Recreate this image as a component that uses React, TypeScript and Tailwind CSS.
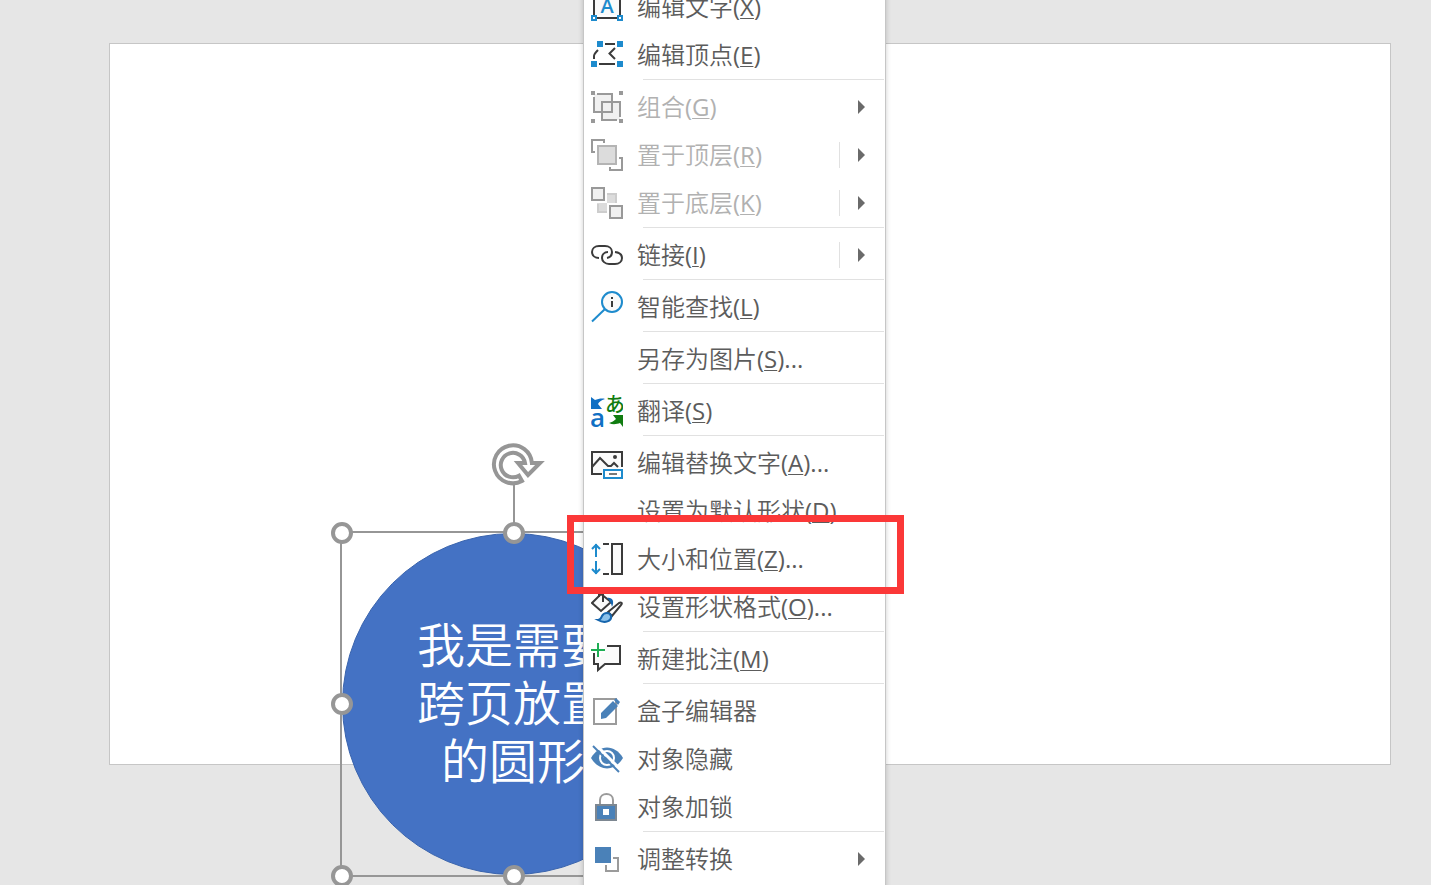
import { Fragment } from 'react';
import type { ReactNode } from 'react';

interface MenuEntry {
  label: string;
  accessKey?: string;
  suffix?: string;
  icon?: ReactNode;
  disabled?: boolean;
  submenu?: boolean;
  split?: boolean;
}

const dark = '#3b3b3b';
const blue = '#1e8bcd';
const gray = '#999';
const steel = '#4a81b8';

function Icon({ children }: { children: ReactNode }) {
  return (
    <svg className="size-8" viewBox="0 0 32 32" fill="none" strokeWidth="2" aria-hidden="true">
      {children}
    </svg>
  );
}

const icons = {
  editText: (
    <Icon>
      <path d="M3 24V1h26v23M6 27h20" stroke={dark} fill="#fafafa"/>
      <text x="16" y="22" textAnchor="middle" fill={blue} className="font-['Open_Sans'] text-[20px] font-semibold">A</text>
      <path d="M1 25h4v4H1zM27 25h4v4h-4z" stroke={blue} fill="#fff"/>
    </Icon>
  ),
  editPoints: (
    <Icon>
      <path d="M3 20v-3c0-2 2-4 4-6M14 5h10M8 25h16M24 9l-5.500 5.500L24 20" stroke={dark}/>
      <path d="M6 2h6v6H6zM26 2h6v6h-6zM0 22h6v6H0zM26 22h6v6h-6z" fill={blue}/>
    </Icon>
  ),
  group: (
    <Icon>
      <path d="M3 3h18v18H3zM11 11h18v18H11z" fill="#f0f0f0"/>
      <path d="M6 3h15v18H3V6M11 26V11h18v15M10 29h16" stroke={gray}/>
      <path d="M11 26v3h15" stroke={gray}/>
      <path d="M0 0h4v4H0zM28 0h4v4h-4zM0 28h4v4H0zM28 28h4v4h-4z" fill={gray}/>
    </Icon>
  ),
  bringFront: (
    <Icon>
      <path d="M4 13H1V1h12v3M28 19h3v12H19v-3" stroke={gray}/>
      <path d="M7 7h18v18H7z" stroke="#b4b4b4" fill="#dcdcdc"/>
    </Icon>
  ),
  sendBack: (
    <Icon>
      <path d="M16 6h10v10H16zM6 16h10v10H6z" fill="#dcdcdc"/>
      <path d="M16 7h9v9M7 17v8h9" stroke="#cdcdcd"/>
      <path d="M1 1h12v12H1zM19 19h12v12H19z" stroke={gray} fill="#f0f0f0"/>
    </Icon>
  ),
  link: (
    <Icon>
      <path d="M8 19C4 19 1 16.500 1 13s3-6 7-6h6c4 0 7 2.500 7 6s-2 5.500-5 6" stroke={dark}/>
      <path d="M17 13c-4 0-6 3-6 6s3 6 7 6h6c4 0 7-2.500 7-6s-3-5.500-7-6" stroke={dark}/>
    </Icon>
  ),
  lookup: (
    <Icon>
      <circle cx="21" cy="11" r="10" stroke={blue} fill="#fafafa"/>
      <path d="M1 30.500l13-12.500" stroke={blue}/>
      <path d="M21 6v2M21 10v6" stroke={dark}/>
    </Icon>
  ),
  translate: (
    <Icon>
      <path d="M0 2l4 3c3-1 7-2 10-1-4 1-6 3-7 5l4 5H0z" fill="#1070c4"/>
      <path d="M32 20H22l3 4c-2 2-4 3-7 4 4 2 8 1 11 0l3 4z" fill="#107c10"/>
      <text x="-1" y="32" fill="#1070c4" className="font-['Open_Sans'] text-[26px] font-semibold">a</text>
      <text x="14" y="17" fill="#107c10" className="font-['Noto_Sans_CJK_JP'] text-[20px] font-medium">あ</text>
    </Icon>
  ),
  altText: (
    <Icon>
      <path d="M11 27H1V5h30v15" stroke={dark} fill="#fafafa"/>
      <path d="M1 20l8-9 8 8h3l3-3 4 4" stroke={dark}/>
      <circle cx="24" cy="10" r="2" fill={dark}/>
      <path d="M13 23h18v8H13z" stroke={blue} fill="#fff"/>
      <path d="M18 27h8" stroke="#777"/>
    </Icon>
  ),
  size: (
    <Icon>
      <path d="M5 14V1M1 6l4-4 4 4M5 18v13M1 26l4 4 4-4" stroke={blue}/>
      <path d="M12 1h6M12 31h6" stroke={dark}/>
      <path d="M21 1h10v30H21z" stroke={dark} fill="#fafafa"/>
    </Icon>
  ),
  formatShape: (
    <Icon>
      <path d="M10 3l10 8-10 9-9-8z" stroke={dark} fill="#fafafa"/>
      <path d="M12 11V2c0-2-4-2-4 0v4" stroke={dark}/>
      <path d="M16 7c5-1 8 3 5 9-1-4-2-6-5-9z" fill="#1565ad"/>
      <path d="M17 21L28 12c2-1 4 0 2 2l-9 11z" stroke={dark} fill="#fff"/>
      <path d="M7 29c3 0 3-2 4-4 2-4 8-4 9 0 1 5-6 8-13 4z" fill="#8cc1ea" stroke="#1565ad"/>
    </Icon>
  ),
  comment: (
    <Icon>
      <path d="M16 3h13v18H14l-7 6v-6H3V10" stroke={dark} fill="#fafafa"/>
      <path d="M7 0v14M0 7h14" stroke="#fff" strokeWidth="6"/>
      <path d="M7 0v14M0 7h14" stroke="#1fae54"/>
    </Icon>
  ),
  boxEditor: (
    <Icon>
      <path d="M3 4h22v25H3z" stroke="#9b9b9b"/>
      <path d="M10 24v-6L22 6l5 5-12 12zM23 5l2-2 4 4-2 3z" fill={steel}/>
    </Icon>
  ),
  hide: (
    <Icon>
      <path d="M0 15C8 1 24 1 32 15 24 29 8 29 0 15z" fill={steel}/>
      <circle cx="16" cy="15" r="7" stroke="#fff" strokeWidth="2"/>
      <path d="M13 15c0-2 1-3 3-3" stroke="#fff"/>
      <path d="M4 1l26 26" stroke="#fff" strokeWidth="3"/>
      <path d="M2 3l26 26" stroke={steel}/>
    </Icon>
  ),
  lock: (
    <Icon>
      <path d="M9 14V9c0-8 13-8 13 0v5" stroke="#9b9b9b"/>
      <path d="M5 14h20v15H5z" fill={steel} stroke="#7d8791"/>
      <path d="M12 18h6v6h-6z" fill="#fff"/>
    </Icon>
  ),
  convert: (
    <Icon>
      <path d="M4 4h16v16H4z" fill={steel}/>
      <path d="M15 22v6h12V15h-5" stroke="#9b9b9b"/>
    </Icon>
  ),
};

// each inner list is one section of the menu, sections are divided by a line
const sections: MenuEntry[][] = [
  [
    { label: '编辑文字', accessKey: 'X', icon: icons.editText },
    { label: '编辑顶点', accessKey: 'E', icon: icons.editPoints },
  ],
  [
    { label: '组合', accessKey: 'G', icon: icons.group, disabled: true, submenu: true },
    { label: '置于顶层', accessKey: 'R', icon: icons.bringFront, disabled: true, submenu: true, split: true },
    { label: '置于底层', accessKey: 'K', icon: icons.sendBack, disabled: true, submenu: true, split: true },
  ],
  [{ label: '链接', accessKey: 'I', icon: icons.link, submenu: true, split: true }],
  [{ label: '智能查找', accessKey: 'L', icon: icons.lookup }],
  [{ label: '另存为图片', accessKey: 'S', suffix: '...' }],
  [{ label: '翻译', accessKey: 'S', icon: icons.translate }],
  [
    { label: '编辑替换文字', accessKey: 'A', suffix: '...', icon: icons.altText },
    { label: '设置为默认形状', accessKey: 'D' },
    { label: '大小和位置', accessKey: 'Z', suffix: '...', icon: icons.size },
    { label: '设置形状格式', accessKey: 'O', suffix: '...', icon: icons.formatShape },
  ],
  [{ label: '新建批注', accessKey: 'M', icon: icons.comment }],
  [
    { label: '盒子编辑器', icon: icons.boxEditor },
    { label: '对象隐藏', icon: icons.hide },
    { label: '对象加锁', icon: icons.lock },
  ],
  [{ label: '调整转换', icon: icons.convert, submenu: true }],
];

function MenuItem({ entry }: { entry: MenuEntry }) {
  return (
    <button
      type="button"
      role="menuitem"
      disabled={entry.disabled}
      className="flex h-12 w-full items-center pr-5 pl-[7px] text-left text-[#5c5c5c] disabled:text-[#b1b1b1]"
    >
      <span className="mr-[14px] size-8 shrink-0">{entry.icon}</span>
      <span className="flex-1 whitespace-nowrap">
        {entry.label}
        {entry.accessKey && (
          <span className="font-normal">
            (<u className="decoration-1 underline-offset-2">{entry.accessKey}</u>){entry.suffix}
          </span>
        )}
      </span>
      {entry.split && <span className="mr-[18px] h-[26px] w-px bg-[#e1e1e1]" />}
      {entry.submenu && (
        <svg className="h-[14px] w-[7px]" viewBox="0 0 7 14" aria-hidden="true">
          <path d="M0 0l7 7-7 7z" fill="#6a6a6a"/>
        </svg>
      )}
    </button>
  );
}

function ContextMenu() {
  return (
    <div
      role="menu"
      className="absolute -top-[18px] left-[583px] w-[303px] border border-[#c6c6c6] bg-white pb-12 text-[24px] leading-8 font-[350] shadow-[0_0_5px_rgba(0,0,0,0.2)]"
    >
      {sections.map((section, index) => (
        <Fragment key={index}>
          {index > 0 && <div role="separator" className="mr-px mb-[3px] ml-[59px] h-px bg-[#e1e1e1]" />}
          {section.map((entry) => <MenuItem key={entry.label} entry={entry} />)}
        </Fragment>
      ))}
    </div>
  );
}

function Handle({ className }: { className: string }) {
  return <span className={`absolute size-[22px] rounded-full border-[4px] border-[#969696] bg-white ${className}`} />;
}

function SelectedShape() {
  return (
    <div className="absolute top-[531px] left-[340px] size-[346px] border-2 border-[#969696]">
      <div className="flex size-full items-center justify-center rounded-full border border-[#3a64ad] bg-[#4472c4] pb-[2px]">
        <p className="text-center text-[48px] leading-[58px] font-[350] text-white">
          我是需要<br />跨页放置<br />的圆形
        </p>
      </div>
      <span className="absolute -top-12 left-[171px] h-12 w-[2px] bg-[#969696]" />
      <svg className="absolute -top-[90px] left-[149px] h-12 w-14" viewBox="0 0 56 48" aria-hidden="true">
        <path
          d="M40.900 20H49L37 32 27 20h7A12.200 12.200 0 1 0 28 32.700L31 38A19 19 0 1 1 40.900 20z"
          fill="#fff"
          stroke="#969696"
          strokeWidth="4"
        />
      </svg>
      <Handle className="-top-[11px] -left-[11px]" />
      <Handle className="-top-[11px] left-[161px]" />
      <Handle className="top-[160px] -left-[11px]" />
      <Handle className="-bottom-3 -left-[11px]" />
      <Handle className="-bottom-3 left-[161px]" />
    </div>
  );
}

export default function App() {
  return (
    <main className="relative flex h-screen overflow-hidden bg-[#e6e6e6] pt-[43px] pr-10 pb-[120px] pl-[109px] font-['Open_Sans','Noto_Sans_CJK_SC',sans-serif]">
      <section aria-label="幻灯片" className="flex-1 border border-[#c6c6c6] bg-white" />
      <SelectedShape />
      <ContextMenu />
      <div className="pointer-events-none absolute top-[515px] left-[567px] h-[79px] w-[337px] border-[7px] border-[#fb3838]" />
    </main>
  );
}
